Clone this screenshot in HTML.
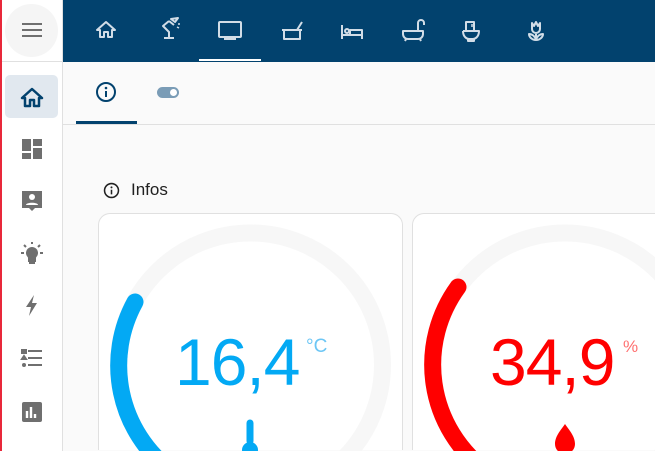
<!DOCTYPE html>
<html style="overflow:hidden"><head><style>
html,body{margin:0;width:655px;height:451px;overflow:hidden}
body{background:#fafafa;font-family:"Liberation Sans",sans-serif;position:relative}
.a{position:absolute}
</style></head><body>
<div class="a" style="left:0;top:0;width:2px;height:451px;background:#e8283a"></div>
<div class="a" style="left:2px;top:0;width:60px;height:451px;background:#fff;border-right:1px solid #e0e0e0"></div>
<div class="a" style="left:5px;top:4px;width:53px;height:53px;border-radius:50%;background:#f5f5f5"></div>
<svg class="a" style="left:22px;top:21px" width="20" height="18"><path d="M0 3h20M0 9h20M0 15h20" stroke="#6f6f6f" stroke-width="2"/></svg>
<div class="a" style="left:2px;top:61px;width:60px;height:1px;background:#e0e0e0"></div>
<div class="a" style="left:5px;top:75px;width:53px;height:43px;border-radius:5px;background:#e1e8ef"></div>
<svg class="a" style="left:20px;top:86px" width="24" height="24" viewBox="0 0 24 24"><path d="M12 3L2 12h3v8h5v-6h4v6h5v-8h3z" fill="none" stroke="#02426e" stroke-width="2.5" stroke-linejoin="round"/></svg>
<svg class="a" style="left:20px;top:137px" width="24" height="24" viewBox="0 0 24 24"><path d="M2 2h9v12H2zM13 2h9v7h-9zM13 11h9v11h-9zM2 16h9v6H2z" fill="#6f6f6f"/></svg>
<svg class="a" style="left:20px;top:189px" width="24" height="24" viewBox="0 0 24 24"><path d="M2 2h20v17h-7l-3 3-3-3H2z" fill="#6f6f6f"/><circle cx="12" cy="8" r="3" fill="#fff"/><path d="M6 16c0-3 12-3 12 0z" fill="#fff"/></svg>
<svg class="a" style="left:20px;top:241px" width="24" height="24" viewBox="0 0 24 24"><circle cx="12" cy="12" r="6" fill="#6f6f6f"/><path d="M9 17h6v3H9zM10 21h4v1h-4zM1 12h3M20 12h3M4 4l2 2M20 4l-2 2M12 1v2" stroke="#6f6f6f" stroke-width="2" fill="#6f6f6f"/></svg>
<svg class="a" style="left:20px;top:293px" width="24" height="24" viewBox="0 0 24 24"><path d="M14 2L6 14h5l-2 9 8-13h-5z" fill="#6f6f6f"/></svg>
<svg class="a" style="left:20px;top:347px" width="24" height="24" viewBox="0 0 24 24"><path d="M2 3h4v3H2zM8 4h14M4 9l2 3H2zM8 11h14M8 18h14" stroke="#6f6f6f" stroke-width="2" fill="#6f6f6f"/><circle cx="4" cy="18" r="2" fill="#6f6f6f"/></svg>
<svg class="a" style="left:20px;top:400px" width="24" height="24" viewBox="0 0 24 24"><rect x="2" y="2" width="20" height="20" rx="2" fill="#6f6f6f"/><path d="M7 11v7M11 7v11M15 14v4" stroke="#fff" stroke-width="2.4"/></svg>

<div class="a" style="left:63px;top:0;width:592px;height:62px;background:#02426e"></div>
<div class="a" style="left:199px;top:59px;width:62px;height:2px;background:#fff"></div>
<svg class="a" style="left:63px;top:0" width="592" height="62" fill="none" stroke="#d2dde7" stroke-width="2" stroke-linejoin="round">
<path d="M43 22l-9 8h3v7h4v-5h4v5h4v-7h3z"/>
<path d="M101 38h10M106 38v-6l-6-6 6-5M106 21l5 4M108 19l4 3 3-4z"/><path d="M115 24l2 0M114 27l2 1M113 20l1-2" stroke-width="1.5"/>
<rect x="156" y="22" width="22" height="15" rx="1"/><path d="M161 39h12"/>
<path d="M219 30h20M221 30v9h16v-9M234 30l5-8"/>
<path d="M279 25v14M279 35h20v4M299 35v-5h-12v5"/><circle cx="284" cy="31" r="2"/>
<path d="M340 31h20v3a5 5 0 0 1-5 5h-10a5 5 0 0 1-5-5zM343 39l-1 2M357 39l1 2M355 31v-8a3 3 0 0 1 6 0v2"/>
<path d="M403 22h8v9h-8zM400 31h16c0 6-4 8-6 8h-4c-2 0-6-2-6-8M405 39v2h6v-2"/><path d="M409 24v3" stroke-width="1.5"/>
<path d="M469 23l2 3 2-4 2 4 2-3v6a4 4 0 0 1-8 0zM473 33v7M473 40c-4 0-7-3-7-6 3 0 6 2 7 6 1-4 4-6 7-6 0 3-3 6-7 6"/>
</svg>

<div class="a" style="left:63px;top:124px;width:592px;height:1px;background:#e0e0e0"></div>
<div class="a" style="left:76px;top:121px;width:61px;height:3px;background:#02426e"></div>
<svg class="a" style="left:95px;top:81px" width="22" height="22" viewBox="0 0 22 22"><circle cx="11" cy="11" r="9" fill="none" stroke="#02426e" stroke-width="2"/><path d="M11 10v6" stroke="#02426e" stroke-width="2"/><circle cx="11" cy="7" r="1.3" fill="#02426e"/></svg>
<div class="a" style="left:157px;top:87px;width:22px;height:11px;border-radius:6px;background:#7a9cb6"></div>
<div class="a" style="left:170px;top:89px;width:7px;height:7px;border-radius:50%;background:#fff"></div>

<svg class="a" style="left:103px;top:182px" width="17" height="17" viewBox="0 0 22 22"><circle cx="11" cy="11" r="9" fill="none" stroke="#212121" stroke-width="2"/><path d="M11 10v6" stroke="#212121" stroke-width="2"/><circle cx="11" cy="7" r="1.3" fill="#212121"/></svg>
<div class="a" style="left:131px;top:180px;font-size:17px;color:#212121">Infos</div>

<div class="a" style="left:98px;top:213px;width:303px;height:236px;background:#fff;border:1px solid #e0e0e0;border-bottom:none;border-radius:12px 12px 0 0"></div>
<div class="a" style="left:412px;top:213px;width:242px;height:236px;background:#fff;border:1px solid #e0e0e0;border-bottom:none;border-right:none;border-radius:12px 0 0 0"></div>
<svg class="a" style="left:0;top:0" width="655" height="451" fill="none" stroke-width="17" stroke-linecap="round">
<circle cx="250.5" cy="365" r="132" stroke="#f7f7f7" stroke-linecap="butt"/>
<path d="M135 302 A132 132 0 0 0 170 470" stroke="#03a9f4"/>
<circle cx="565" cy="365" r="132" stroke="#f7f7f7" stroke-linecap="butt"/>
<path d="M458 287 A132 132 0 0 0 485 470" stroke="#ff0000"/>
<path d="M250 423v18" stroke="#03a9f4" stroke-width="7"/><circle cx="250" cy="450" r="8" fill="#03a9f4" stroke="none"/>
<path d="M565 424c-4 6-10 12-10 20a10 10 0 0 0 20 0c0-8-6-14-10-20z" fill="#ff0000" stroke="none"/>
</svg>
<div class="a" style="left:175px;top:324px;font-size:66px;color:#03a9f4;letter-spacing:-1px">16,4</div>
<div class="a" style="left:306px;top:336px;font-size:19px;color:#6cc6f5">°C</div>
<div class="a" style="left:490px;top:324px;font-size:66px;color:#ff0000;letter-spacing:-1px">34,9</div>
<div class="a" style="left:623px;top:337px;font-size:17px;color:#ff7070">%</div>
</body></html>
